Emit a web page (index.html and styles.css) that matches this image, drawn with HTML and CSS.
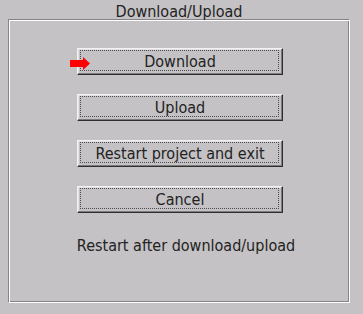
FILE: index.html
```html
<!DOCTYPE html>
<html>
<head>
<meta charset="utf-8">
<link rel="stylesheet" href="styles.css">
</head>
<body>
<div class="title">Download/Upload</div>
<div class="frame">
  <div class="btn current">Download
    <svg class="arrow" width="20" height="14" viewBox="0 0 20 14"><polygon points="0,3 13,3 13,0 20,6.5 13,13 13,10 0,10" fill="#ff0000"/></svg>
  </div>
  <div class="btn">Upload</div>
  <div class="btn">Restart project and exit</div>
  <div class="btn">Cancel</div>
  <div class="note">Restart after download/upload</div>
</div>
</body>
</html>
```
FILE: styles.css
```css
html, body {
  margin: 0;
  padding: 0;
  background: #c5c2c5;
  width: 363px;
  height: 314px;
  overflow: hidden;
}
body {
  font-family: "DejaVu Sans Condensed", "DejaVu Sans", sans-serif;
  font-stretch: condensed;
  font-size: 16px;
  color: #222222;
}
.title {
  box-sizing: border-box;
  height: 19px;
  padding-top: 4px;
  line-height: 15px;
  text-align: center;
  width: 358px;
}
.frame {
  box-sizing: border-box;
  margin-left: 8px;
  width: 342px;
  height: 284px;
  border-style: solid;
  border-width: 1px;
  border-color: #858385 #ffffff #ffffff #858385;
  box-shadow: inset 1px 1px 0 #ffffff, inset -1px -1px 0 #858385;
  padding: 28px 0 0 2px;
  display: flex;
  flex-direction: column;
  align-items: center;
  gap: 19px;
}
.btn {
  position: relative;
  box-sizing: border-box;
  width: 206px;
  height: 27px;
  border-style: solid;
  border-width: 1px;
  border-color: #f2f2f2 #2e2e2e #2e2e2e #f2f2f2;
  box-shadow: inset -1px -1px 0 #7c7a7c, inset 1px 1px 0 #e2e0e2;
  text-align: center;
  line-height: 26px;
  flex: none;
}
.btn::after {
  content: "";
  position: absolute;
  left: 2px;
  top: 1px;
  right: 3px;
  bottom: 3px;
  border: 1px dotted #4c4c4c;
}
.arrow {
  position: absolute;
  left: -8px;
  top: 8px;
  z-index: 2;
  display: block;
}
.note {
  margin-top: 4px;
  margin-left: 12px;
  line-height: 19px;
}
```
